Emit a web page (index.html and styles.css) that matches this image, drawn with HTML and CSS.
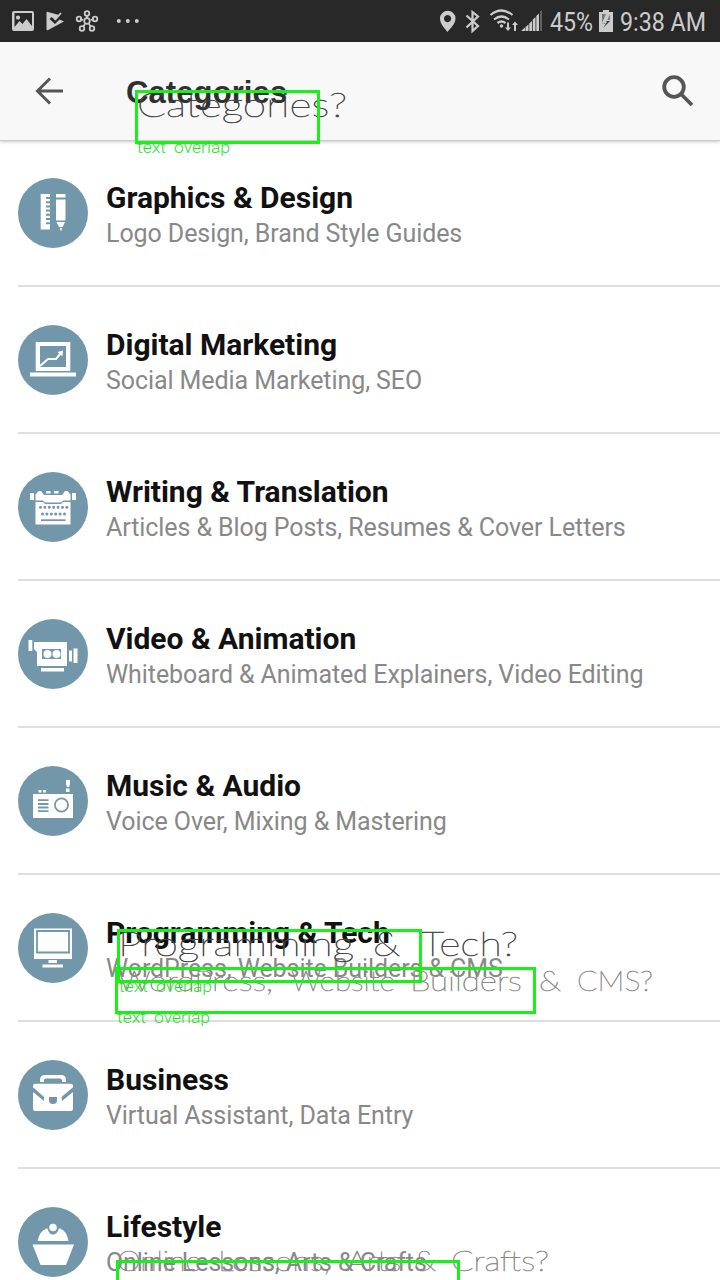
FILE: index.html
```
<!DOCTYPE html>
<html lang="en">
<head>
<meta charset="utf-8">
<title>Categories</title>
<link rel="stylesheet" href="styles.css">
</head>
<body>
<div class="screen">
  <header class="status">
    <svg class="status-left" width="145" height="42" viewBox="0 0 145 42">
      <path fill-rule="evenodd" d="M14 11h18q2 0 2 2v16q0 2-2 2H14q-2 0-2-2V13q0-2 2-2zm.5 2v14l5-6 3 3 4-5 5.500 7V13zM18 15.500a2 2 0 1 1 0 4.200a2 2 0 0 1 0-4.200z"/>
      <path d="M48 12q-1.500-.7-1.500 1v16q0 2 1.700 1L64 21.500l-4.500-2-4.500 4.500-5.500-5 2-2 3.500 3 4-5z"/>
      <path d="M55 20l6-7" class="line"/>
      <g class="line"><path d="M87 18v-3M83 20l-3-1M91 20l3-1M85 24l-2 3M89 24l2 3"/><circle cx="87" cy="21" r="2.800"/><circle cx="87" cy="13.500" r="2.300"/><circle cx="79" cy="19" r="2.300"/><circle cx="95" cy="19" r="2.300"/><circle cx="82" cy="28.500" r="2.300"/><circle cx="92" cy="28.500" r="2.300"/></g>
      <g><circle cx="118.800" cy="21" r="2"/><circle cx="127.800" cy="21" r="2"/><circle cx="136.800" cy="21" r="2"/></g>
    </svg>
    <div class="status-right">
      <svg width="104" height="42" viewBox="438 0 104 42">
        <path fill-rule="evenodd" d="M447.500 32c-3-4-7.500-8-7.500-13.500a7.500 7.500 0 0 1 15.500 0c0 5.500-5 9.500-8 13.500zm0-17a3.600 3.600 0 1 0 .1 0z"/>
        <path class="line thick" d="M466.500 15.500l11.500 10.500-5.500 5V12l5.500 4.500-11.500 11"/>
        <g class="line thick"><path d="M490.500 15q11-9 22 0M494 19.500q7.500-6 15 0M497.500 23q4-3 8 0"/></g>
        <circle cx="501.500" cy="26" r="1.700"/>
        <path d="M507 22.500h2v5h2l-3 3.500-3-3.500h2zM514 31h2v-6h2l-3-3.500-3 3.500h2z"/>
        <path d="M521 31l4-3.500v3.500zM525.500 27l3-2.500V31h-3zM529.300 23.500l2.700-2.500V31h-2.700zM532.800 19.500l2.700-2.500V31h-2.700zM536.300 16l2.700-2.500V31h-2.700z"/>
        <path opacity=".35" d="M540 11.500l2-1.500v21h-2z"/>
      </svg>
      <svg class="clock" width="178" height="42" viewBox="542 0 178 42">
        <text x="550" y="31" textLength="43" lengthAdjust="spacingAndGlyphs">45%</text>
        <path d="M599 12h4v-2h6v2h4v20h-14z"/><path d="M602 14h8v6h-3l-2 4-3-1z" fill="#777"/><path d="M606 14l-4 9h4l-2 6 7-8h-4l3-7z" fill="#ccc"/><path d="M603 28l7-7h-4l1 1z" fill="#333"/>
        <text x="620" y="31" textLength="86" lengthAdjust="spacingAndGlyphs">9:38 AM</text>
      </svg>
    </div>
  </header>
  <div class="appbar">
    <svg class="back" width="32" height="32" viewBox="0 0 32 32"><path d="M29 16H4M16 3.500L3.500 16 16 28.500"/></svg>
    <h1>Categories</h1>
    <svg class="search" width="36" height="36" viewBox="0 0 36 36"><circle cx="14" cy="14" r="9.800"/><path d="M21 21l11 11"/></svg>
  </div>
  <main class="list">
    <section class="row"><svg class="icon" viewBox="0 0 70 70"><circle class="disc" cx="35" cy="35" r="35"/><path d="M22.700 16h9.300v3h-4v2h4v2.200h-4v2h4v2.200h-4v2h4v2.200h-4v2h4v2.200h-4v2h4v2.200h-4v2h4v2.200h-4v2h4v5.300h-9.300zM38 16h9.500v3.500H38zM38 21.500h9.500v21H38zM38.500 44h8.500l-2.300 5h-3.700zM41.700 50h2.500l-1.200 3.500z"/></svg><div class="copy"><h2>Graphics &amp; Design</h2><p>Logo Design, Brand Style Guides</p></div></section>
    <section class="row"><svg class="icon" viewBox="0 0 70 70"><circle class="disc" cx="35" cy="35" r="35"/><path fill-rule="evenodd" d="M17.700 17h34.600v29H17.700zM22 21v21h26V21zM12 47.500h46v4H12z"/><path class="draw" d="M22 41l8-7h8l5-6"/><path d="M39.500 27l5.500-1.500-.500 6z"/></svg><div class="copy"><h2>Digital Marketing</h2><p>Social Media Marketing, SEO</p></div></section>
    <section class="row"><svg class="icon" viewBox="0 0 70 70"><circle class="disc" cx="35" cy="35" r="35"/><path d="M12 21h4v7h-4zM54 21h4v7h-4zM28 19h4.500v2.500H28zM36 19h4.500v2.500H36zM17.500 22.500l3-3.500h2.500l3 4h18l3-4h2.500l3 3.500v6h-7.500l-2 2H27l-2-2h-7.500zM17.500 30H25l2 2h16l2-2h7.500v22.500h-35z"/><path class="keys" d="M22.500 35.300h27M24.500 42h24"/><path class="cut" d="M23 48.200h24.500"/></svg><div class="copy"><h2>Writing &amp; Translation</h2><p>Articles &amp; Blog Posts, Resumes &amp; Cover Letters</p></div></section>
    <section class="row"><svg class="icon" viewBox="0 0 70 70"><circle class="disc" cx="35" cy="35" r="35"/><path d="M10.500 21h3.800v11h-3.800zM16 23h33v24H19V33l-3-3zM51 31.500h3v11h-3zM55.500 29.500h4v14.500h-4zM23 49h23v3.500H23z"/><path fill="#7297aa" d="M24 30h19v10H24z"/><circle cx="29.500" cy="35" r="4"/><circle cx="38.500" cy="35" r="4"/></svg><div class="copy"><h2>Video &amp; Animation</h2><p>Whiteboard &amp; Animated Explainers, Video Editing</p></div></section>
    <section class="row"><svg class="icon" viewBox="0 0 70 70"><circle class="disc" cx="35" cy="35" r="35"/><path d="M15 28h40v24H15zM20.500 24h3v2.500h-3zM25 24h3v2.500h-3zM48 14h4v4l-1 3h-2l-1-3zM48 22.500h3.500V26H48z"/><path class="cut" d="M20 34.200h10.500M20 38h10.500M20 41.500h10.500M20 45.200h10.500"/><circle class="cut" cx="43.500" cy="39" r="6.600"/></svg><div class="copy"><h2>Music &amp; Audio</h2><p>Voice Over, Mixing &amp; Mastering</p></div></section>
    <section class="row"><svg class="icon" viewBox="0 0 70 70"><circle class="disc" cx="35" cy="35" r="35"/><path d="M16 15.500h38V46H16zM30.500 47h8.500v3h-8.500zM24.500 51.500H45v3H24.500z"/><path class="cut" d="M19 18h32v21.500H19z"/></svg><div class="copy"><h2>Programming &amp; Tech</h2><p>WordPress, Website Builders &amp; CMS</p></div></section>
    <section class="row"><svg class="icon" viewBox="0 0 70 70"><circle class="disc" cx="35" cy="35" r="35"/><path d="M22 22v-2q0-5 5-5h16q5 0 5 5v2h-4v-1.500q0-2-2-2H28q-2 0-2 2V22zM17 23.700h36q2 0 2 2v1.500L43.500 37l.500 4L55 32v17q0 2-2 2H17q-2 0-2-2V32l11 9v-4L15 27.200v-1.500q0-2 2-2z"/><path fill="#7297aa" d="M31 37h8v3q0 4-4 4t-4-4z"/></svg><div class="copy"><h2>Business</h2><p>Virtual Assistant, Data Entry</p></div></section>
    <section class="row"><svg class="icon" viewBox="0 0 70 70"><circle class="disc" cx="35" cy="35" r="35"/><path d="M19.500 34q2-10 9-12.500h1q1.500 6 5.500 6t6-6h1q7 2.500 8.500 12.500z"/><circle cx="35" cy="20.500" r="3.800"/><path d="M14.500 37.500h41.500L48 58H22.500z"/></svg><div class="copy"><h2>Lifestyle</h2><p>Online Lessons, Arts &amp; Crafts</p></div></section>
  </main>
  <svg class="annotations" width="720" height="1280" viewBox="0 0 720 1280">
    <g class="thin dark">
      <text x="137" y="117" textLength="210" lengthAdjust="spacingAndGlyphs">Categories?</text>
      <text x="118" y="956" textLength="236" lengthAdjust="spacingAndGlyphs">Programming</text><text x="373" y="956" textLength="27" lengthAdjust="spacingAndGlyphs">&amp;</text><text x="421" y="956" textLength="97" lengthAdjust="spacingAndGlyphs">Tech?</text>
    </g>
    <g class="thin gray">
      <text x="118" y="991" textLength="155" lengthAdjust="spacingAndGlyphs">WordPress,</text><text x="291" y="991" textLength="104" lengthAdjust="spacingAndGlyphs">Website</text><text x="410" y="991" textLength="112" lengthAdjust="spacingAndGlyphs">Builders</text><text x="539" y="991" textLength="22" lengthAdjust="spacingAndGlyphs">&amp;</text><text x="577" y="991" textLength="76" lengthAdjust="spacingAndGlyphs">CMS?</text>
      <text x="117" y="1271" textLength="84" lengthAdjust="spacingAndGlyphs">Online</text><text x="218" y="1271" textLength="112" lengthAdjust="spacingAndGlyphs">Lessons,</text><text x="347" y="1271" textLength="54" lengthAdjust="spacingAndGlyphs">Arts</text><text x="414" y="1271" textLength="22" lengthAdjust="spacingAndGlyphs">&amp;</text><text x="451" y="1271" textLength="98" lengthAdjust="spacingAndGlyphs">Crafts?</text>
    </g>
    <g class="box"><path d="M136.500 91.500h182v51h-182zM118.500 930.500h302v51h-302zM116.500 968.500h418v44h-418zM117.500 1290v-28.500h341V1290"/></g>
    <g class="label">
      <text x="137" y="153" textLength="29" lengthAdjust="spacingAndGlyphs">text</text><text x="174" y="153" textLength="56" lengthAdjust="spacingAndGlyphs">overlap</text>
      <text x="119" y="992" textLength="29" lengthAdjust="spacingAndGlyphs">text</text><text x="156" y="992" textLength="56" lengthAdjust="spacingAndGlyphs">overlap</text>
      <text x="117" y="1023" textLength="29" lengthAdjust="spacingAndGlyphs">text</text><text x="154" y="1023" textLength="56" lengthAdjust="spacingAndGlyphs">overlap</text>
    </g>
  </svg>
</div>
</body>
</html>
```
FILE: styles.css
```
* { box-sizing: border-box; }
body { margin: 0; background: #fff; font-family: Roboto, sans-serif; }
.screen { position: relative; width: 720px; height: 1280px; overflow: hidden; display: flex; flex-direction: column; }
.status { flex: none; height: 42px; background: #282828; display: flex; justify-content: space-between; fill: #ccc; }
.status svg { display: block; }
.status-right { display: flex; }
.line { fill: none; stroke: #ccc; stroke-width: 1.8; }
.thick { stroke-width: 2.2; }
.clock { font-size: 26px; }
.appbar { flex: none; height: 99px; background: #f8f8f8; display: flex; align-items: center; padding: 0 24px 0 34px; border-bottom: 1px solid #ccc; box-shadow: 0 1px 3px rgba(0,0,0,.22); z-index: 1; }
.back, .search { fill: none; stroke: #555; stroke-width: 3; }
.search { stroke-width: 3.8; margin-left: auto; }
h1 { margin: 0 0 0 60px; padding-top: 3px; font: bold 31px "Liberation Sans", sans-serif; letter-spacing: .1px; color: #303030; }
.list { padding-left: 18px; }
.row { height: 147px; display: flex; gap: 18px; padding-top: 38px; border-bottom: 2px solid #dedede; }
.row:first-child { height: 146px; padding-top: 37px; }
.icon { width: 70px; height: 70px; flex: none; fill: #fff; }
.disc { fill: #7297aa; }
.draw { fill: none; stroke: #fff; stroke-width: 2; }
.cut { fill: none; stroke: #7297aa; stroke-width: 1.8; }
.keys { fill: none; stroke: #7297aa; stroke-width: 3; stroke-linecap: round; stroke-dasharray: 0 4.4; }
.copy { white-space: nowrap; padding-top: 1px; }
h2 { margin: 0; font-size: 30px; line-height: 38px; font-weight: 700; letter-spacing: -.02px; color: #111; }
p { margin: 0; font-size: 25px; line-height: 34px; letter-spacing: -.08px; color: #888; }
.annotations { position: absolute; inset: 0; z-index: 2; }
.thin { font-family: Lato, Roboto, sans-serif; font-weight: 100; }
.dark { font-size: 34px; fill: #444; stroke: #444; stroke-width: .6; }
.gray { font-size: 28px; fill: #888; stroke: #888; stroke-width: .6; }
.box { fill: none; stroke: #18f018; stroke-width: 3; }
.label { font: 300 16px Roboto, sans-serif; fill: #28df28; }
```
